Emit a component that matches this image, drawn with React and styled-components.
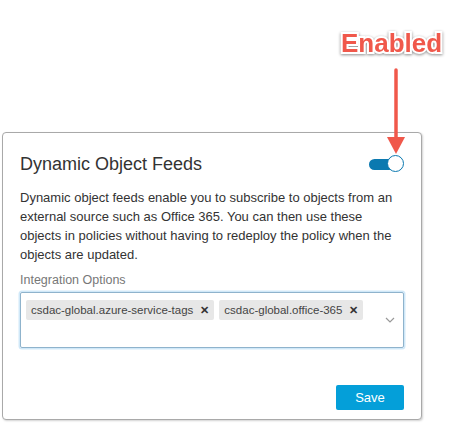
import React from "react";
import styled, { createGlobalStyle } from "styled-components";

const Global = createGlobalStyle`
  html, body { margin: 0; padding: 0; background: #fff; }
  body { font-family: "Liberation Sans", Arial, sans-serif; }
`;

const Stage = styled.div`
  position: relative;
  width: 449px;
  height: 424px;
  padding: 132px 0 0 2px;
  box-sizing: border-box;
  overflow: hidden;
`;

const Card = styled.section`
  width: 420px;
  height: 288px;
  box-sizing: border-box;
  border: 1px solid #a9a9a9;
  border-radius: 4px;
  box-shadow: 1px 1px 2px rgba(0, 0, 0, 0.18);
  background: #fff;
  padding: 21px 17px 9px 17px;
  display: flex;
  flex-direction: column;
  color: #333;
`;

const Header = styled.div`
  display: flex;
  align-items: center;
  justify-content: space-between;
  height: 20px;
`;

const Title = styled.h2`
  margin: 0;
  font-size: 18px;
  font-weight: 400;
  line-height: 20px;
  color: #333;
`;

const Toggle = styled.div`
  position: relative;
  width: 35px;
  height: 18px;
  display: flex;
  align-items: center;
`;

const Track = styled.div`
  width: 30px;
  height: 11px;
  border-radius: 6px;
  background: #0b79b0;
`;

const Knob = styled.div`
  position: absolute;
  right: 0;
  top: 0;
  width: 15px;
  height: 15px;
  border-radius: 50%;
  background: #fff;
  border: 1.5px solid #0b79b0;
`;

const Description = styled.p`
  margin: 14px 0 0 0;
  font-size: 13px;
  line-height: 19px;
  color: #333;
`;

const Label = styled.div`
  margin-top: 8px;
  font-size: 12.5px;
  line-height: 17px;
  color: #777;
`;

const Select = styled.div`
  margin-top: 3px;
  height: 56px;
  box-sizing: border-box;
  border: 1px solid #8fb3cc;
  border-radius: 2px;
  box-shadow: 0 0 0 1.5px rgba(120, 190, 235, 0.35);
  display: flex;
  align-items: flex-start;
  padding: 7px 8px 0 5px;
`;

const Tags = styled.div`
  display: flex;
  flex: 1;
  gap: 5px;
  flex-wrap: wrap;
`;

const Tag = styled.span`
  display: inline-flex;
  align-items: center;
  height: 20px;
  padding: 0 5px 0 5px;
  background: #e7e7e7;
  border-radius: 2px;
  font-size: 11.5px;
  color: #444;
  gap: 7px;
`;

const Remove = styled.span`
  font-size: 11px;
  font-weight: 700;
  color: #333;
`;

const Chevron = styled.svg`
  margin-top: 17px;
  width: 10px;
  height: 6px;
`;

const Footer = styled.div`
  margin-top: auto;
  display: flex;
  justify-content: flex-end;
`;

const SaveButton = styled.button`
  width: 68px;
  height: 25px;
  border: none;
  border-radius: 2px;
  background: #049fd9;
  color: #fff;
  font-family: "Liberation Sans", Arial, sans-serif;
  font-size: 13px;
  padding: 0;
`;

const Callout = styled.div`
  position: absolute;
  left: 341px;
  top: 27px;
  font-family: "Liberation Sans", Arial, sans-serif;
  font-weight: 700;
  font-size: 26px;
  line-height: 32px;
  color: #f0584b;
  -webkit-text-stroke: 4px #fff;
  paint-order: stroke fill;
  filter: drop-shadow(0 1px 1.5px rgba(0, 0, 0, 0.45));
`;

const Arrow = styled.svg`
  position: absolute;
  left: 387px;
  top: 68px;
`;

export default function App() {
  return (
    <>
      <Global />
      <Stage>
        <Card>
          <Header>
            <Title>Dynamic Object Feeds</Title>
            <Toggle>
              <Track />
              <Knob />
            </Toggle>
          </Header>
          <Description>
            Dynamic object feeds enable you to subscribe to objects from an
            external source such as Office 365. You can then use these
            objects in policies without having to redeploy the policy when the
            objects are updated.
          </Description>
          <Label>Integration Options</Label>
          <Select>
            <Tags>
              <Tag>
                csdac-global.azure-service-tags <Remove>✕</Remove>
              </Tag>
              <Tag>
                csdac-global.office-365 <Remove>✕</Remove>
              </Tag>
            </Tags>
            <Chevron viewBox="0 0 10 6">
              <path d="M1 1 L5 5 L9 1" fill="none" stroke="#999" strokeWidth="1.2" />
            </Chevron>
          </Select>
          <Footer>
            <SaveButton>Save</SaveButton>
          </Footer>
        </Card>
        <Callout>Enabled</Callout>
        <Arrow width="18" height="88" viewBox="0 0 18 88">
          <line x1="9" y1="2" x2="9" y2="74" stroke="#f0584b" strokeWidth="3.5" strokeLinecap="round" />
          <polygon points="0,69 18,69 9,86" fill="#f0584b" />
        </Arrow>
      </Stage>
    </>
  );
}
